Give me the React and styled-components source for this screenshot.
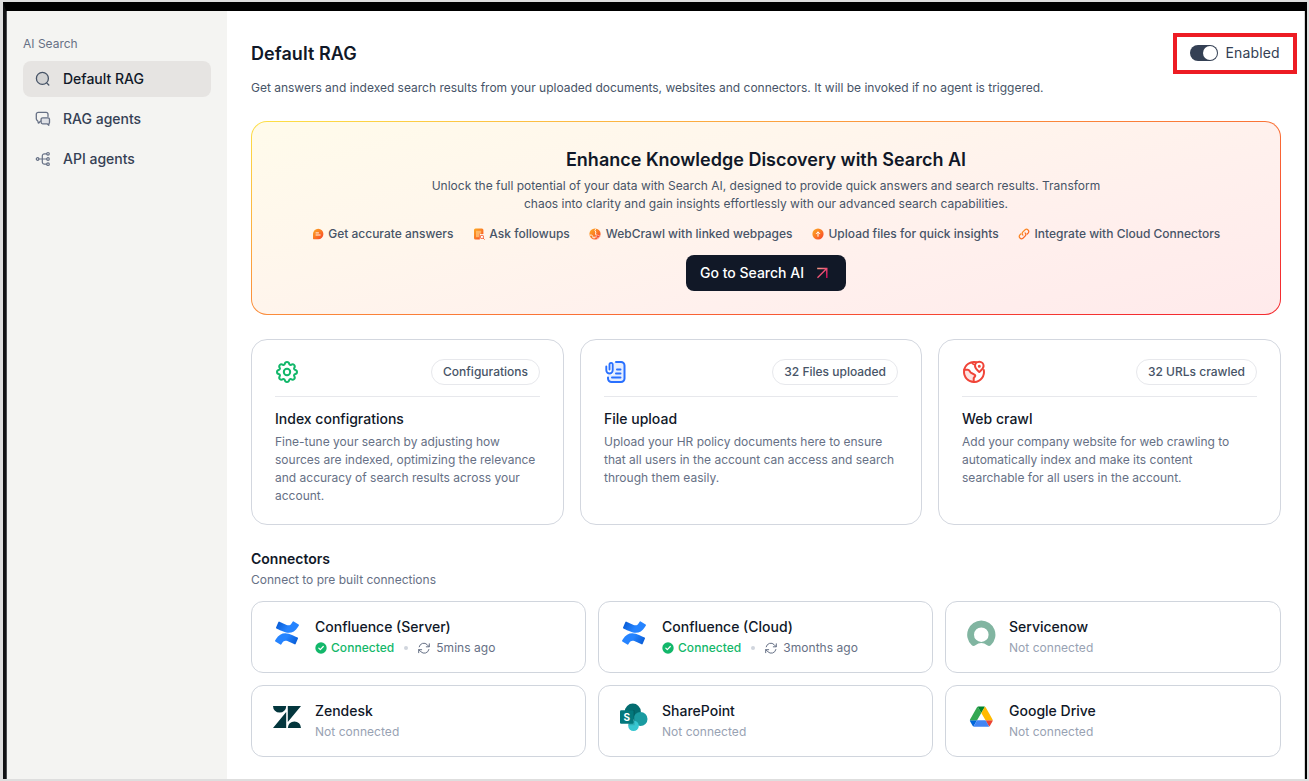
import React from "react";
import styled, { createGlobalStyle } from "styled-components";

const Global = createGlobalStyle`
  *, *::before, *::after { box-sizing: border-box; }
  body { margin: 0; background: #dedede; font-family: Inter, "Liberation Sans", sans-serif; color: #101828; }
  h1, h2, h3, p { margin: 0; }
  svg { display: block; flex: none; }
`;

const Frame = styled.div`
  width: 1309px;
  height: 781px;
  padding: 2px 2px 2px 3px;
  background: #dedede;
  overflow: hidden;
`;
const Screen = styled.div`
  display: flex;
  height: 777px;
  border-style: solid;
  border-width: 9px 2px 0 3px;
  border-color: #000 #000 #000 #111214;
  background: #fff;
`;

const Sidebar = styled.nav`
  width: 221px;
  padding: 24px 16px;
  border-left: 1px solid #4b4d50;
  background: #f4f4f2;
  display: flex;
  flex-direction: column;
  gap: 4px;
`;
const SidebarTitle = styled.div`
  font-size: 12px;
  line-height: 18px;
  height: 22px;
  color: #667085;
`;
const NavItem = styled.a`
  display: flex;
  align-items: center;
  gap: 12px;
  height: 36px;
  padding: 0 12px;
  border-radius: 8px;
  font-size: 14px;
  line-height: 18px;
  font-weight: 500;
  color: ${(p) => (p.$active ? "#101828" : "#344054")};
  background: ${(p) => (p.$active ? "#e6e4e2" : "transparent")};
`;
const NavLabel = styled.span`
  padding-bottom: 1px;
`;

const Main = styled.main`
  flex: 1;
  padding: 22px 23px 0 24px;
  border-right: 1px solid #d6d6d6;
`;
const Header = styled.header`
  display: flex;
  justify-content: space-between;
  height: 46px;
`;
const PageTitle = styled.h1`
  margin-top: 7px;
  font-size: 18px;
  line-height: 28px;
  font-weight: 600;
  letter-spacing: 0.05px;
`;
const StatusBox = styled.div`
  display: flex;
  align-items: center;
  gap: 8px;
  width: 124px;
  height: 41px;
  margin-right: -16px;
  padding: 0 0 2px 12.5px;
  border: 4px solid #ed1c24;
  font-size: 14px;
  line-height: 17px;
  letter-spacing: 0.13px;
  color: #344054;
`;
const Toggle = styled.span`
  display: flex;
  justify-content: flex-end;
  width: 28px;
  height: 16px;
  padding: 1px;
  border-radius: 8px;
  background: #344054;
  &::after { content: ""; width: 14px; height: 14px; border-radius: 50%; background: #fff; }
`;
const Lead = styled.p`
  height: 42px;
  font-size: 12px;
  line-height: 18px;
  color: #475467;
  letter-spacing: -0.01px;
  white-space: nowrap;
`;

const Hero = styled.section`
  display: flex;
  flex-direction: column;
  align-items: center;
  height: 194px;
  padding-top: 24px;
  border: 1px solid transparent;
  border-radius: 16px;
  background:
    linear-gradient(165deg, #fffbeb 0%, #fff6ec 35%, #fff0ed 66%, #ffeaeb 100%) padding-box,
    linear-gradient(165deg, #fde047 0%, #fb923c 38%, #fa7035 60%, #f42c30 92%) border-box;
`;
const HeroTitle = styled.h2`
  font-size: 18px;
  line-height: 28px;
  font-weight: 600;
`;
const HeroText = styled.p`
  margin-top: 3px;
  font-size: 12px;
  line-height: 18px;
  color: #475467;
  text-align: center;
  white-space: pre-line;
`;
const FeatureList = styled.div`
  display: flex;
  gap: 19.5px;
  margin-top: 12px;
`;
const Feature = styled.span`
  display: flex;
  align-items: center;
  gap: 4.5px;
  font-size: 12px;
  line-height: 18px;
  font-weight: 500;
  color: #475467;
  white-space: nowrap;
`;
const HeroButton = styled.button`
  display: flex;
  align-items: center;
  gap: 12px;
  width: 160px;
  height: 36px;
  margin-top: 12px;
  padding: 0 14px;
  border: 0;
  border-radius: 8px;
  background: #111827;
  color: #fff;
  font: 500 14px/18px Inter, sans-serif;
  white-space: nowrap;
`;

const SourceGrid = styled.section`
  display: grid;
  grid-template-columns: 313px 342px 1fr;
  gap: 16px;
  margin-top: 24px;
`;
const SourceCard = styled.article`
  height: 186px;
  padding: 19px 23px;
  border: 1px solid #d3d7df;
  border-radius: 16px;
`;
const SourceHead = styled.div`
  display: flex;
  align-items: center;
  justify-content: space-between;
  height: 38px;
  padding-bottom: 11px;
  border-bottom: 1px solid #e7e8ec;
`;
const Pill = styled.span`
  padding: 0 11px;
  border: 1px solid #e7e8ec;
  border-radius: 13px;
  font-size: 12px;
  font-weight: 500;
  line-height: 24px;
  color: #475467;
`;
const SourceTitle = styled.h3`
  margin-top: 12px;
  font-size: 14px;
  line-height: 20px;
  font-weight: 500;
`;
const SourceText = styled.p`
  margin-top: 4px;
  font-size: 12px;
  line-height: 18px;
  color: #667085;
  white-space: pre;
`;

const SectionTitle = styled.h2`
  margin-top: 24px;
  font-size: 14px;
  line-height: 20px;
  font-weight: 600;
`;
const SectionText = styled.p`
  margin-top: 2px;
  font-size: 12px;
  line-height: 18px;
  color: #667085;
`;
const ConnectorGrid = styled.section`
  display: grid;
  grid-template-columns: 335px 335px 1fr;
  gap: 12px;
  margin-top: 12px;
`;
const ConnectorCard = styled.article`
  display: flex;
  gap: 12px;
  height: 72px;
  padding: 15px 19px;
  border: 1px solid #d0d5dd;
  border-radius: 12px;
`;
const ConnectorName = styled.h3`
  font-size: 14px;
  line-height: 20px;
  font-weight: 500;
`;
const ConnectorStatus = styled.div`
  display: flex;
  align-items: center;
  margin-top: 2px;
  font-size: 12px;
  line-height: 18px;
  letter-spacing: 0.04px;
  color: #98a2b3;
`;
const Connected = styled.span`
  display: flex;
  align-items: center;
  gap: 4px;
  font-weight: 500;
  color: #12b76a;
`;
const Dot = styled.span`
  width: 4px;
  height: 4px;
  margin: 0 10px;
  border-radius: 50%;
  background: #d0d5dd;
`;
const Synced = styled.span`
  display: flex;
  align-items: center;
  gap: 6px;
  color: #667085;
`;

const Line = ({ size = 16, box = 16, color, width = 1.3, children }) => (
  <svg width={size} height={size} viewBox={`0 0 ${box} ${box}`} fill="none" stroke={color} strokeWidth={width} strokeLinecap="round" strokeLinejoin="round">
    {children}
  </svg>
);

const SearchIcon = () => (
  <Line color="#475467">
    <circle cx="7.4" cy="7.4" r="6" fill="#d3d3d3" />
    <path d="M11.700 11.900l2.100 2.100" />
  </Line>
);
const ChatIcon = () => (
  <Line color="#667085">
    <path d="M5.600 10.200c-1 .1-1.300 1.900-2 1.900s-.3-1.700-1-2.300c-.8-.5-1.300-1-1.300-2V3.300a2 2 0 0 1 2-2h7.700a2 2 0 0 1 2 2v2.200" />
    <path d="M7.600 6.800h5.400a1.500 1.500 0 0 1 1.500 1.500v3.200c0 .7-.5 1-.7 1.400v1.400l-1.700-1.500H7.600a1.500 1.500 0 0 1-1.500-1.500v-3a1.500 1.500 0 0 1 1.500-1.500z" fill="#dfe1e6" />
  </Line>
);
const NodesIcon = () => (
  <Line color="#667085" width={1.2}>
    <circle cx="2.600" cy="8" r="1.300" /><circle cx="13" cy="2.800" r="1.300" />
    <circle cx="13" cy="8" r="1.300" /><circle cx="13" cy="13.200" r="1.300" />
    <path d="M3.900 8h7.800M11.700 2.800H9.500A2.200 2.200 0 0 0 7.300 5v6a2.200 2.200 0 0 0 2.200 2.200h2.200" />
  </Line>
);

const Warm = ({ id, children }) => (
  <svg width="12" height="12" viewBox="0 0 12 12" fill="none">
    <defs>
      <linearGradient id={id} x1="0" y1="0" x2="12" y2="12" gradientUnits="userSpaceOnUse">
        <stop stopColor="#fdb022" /><stop offset=".5" stopColor="#fb7a24" /><stop offset="1" stopColor="#f73a2c" />
      </linearGradient>
    </defs>
    {children}
  </svg>
);
const AnswerIcon = () => (
  <Warm id="w1">
    <path d="M6.200.8a5.200 5.200 0 1 1 0 10.400H1.500A.6.6 0 0 1 1 10.600V6A5.200 5.200 0 0 1 6.200.8z" fill="url(#w1)" />
    <path d="M4 4.900h2.500M4 7h4.200" stroke="#fff" strokeWidth=".9" strokeLinecap="round" />
  </Warm>
);
const FollowIcon = () => (
  <Warm id="w2">
    <path d="M2.500.5h6.400a1.500 1.500 0 0 1 1.500 1.500v4H6.800v5.500H2.500A1.500 1.500 0 0 1 1 10V2A1.500 1.500 0 0 1 2.500.5z" fill="url(#w2)" />
    <path d="M3 2.700h5.200v3H6v3.500H3z" fill="#ffc77d" opacity=".75" />
    <rect x="7.400" y="7.400" width="3" height="3" rx=".8" fill="#fff" stroke="#f75a2c" strokeWidth="1" />
    <path d="M10.400 10.400l.9.9" stroke="#f75a2c" strokeLinecap="round" />
  </Warm>
);
const CrawlIcon = () => (
  <Warm id="w3">
    <circle cx="6" cy="6" r="5.600" fill="url(#w3)" />
    <path d="M6.700.8L5.900 2.700l1 1.300-.4 2 .4.900M.7 7l2 .2 1.300 1.200-.1 1.400h2.200V8.400" stroke="#fff3e8" strokeWidth="1" />
    <path d="M6.800 6.500l5 1.900-2.100.9-.9 2.200z" fill="#f7462c" stroke="#fff3ee" strokeWidth=".5" />
  </Warm>
);
const UploadIcon = () => (
  <Warm id="w4">
    <circle cx="6" cy="6" r="5.600" fill="url(#w4)" />
    <path d="M6 8.300V4.100M4.300 5.600L6 3.900l1.700 1.700" stroke="#fff" strokeWidth="1" strokeLinecap="round" strokeLinejoin="round" />
  </Warm>
);
const LinkIcon = () => (
  <Warm id="w5">
    <g stroke="url(#w5)" strokeWidth="1.250" strokeLinecap="round">
      <path d="M4.900 7.100a2.300 2.300 0 0 1 0-3.200l2.200-2.200a2.300 2.300 0 0 1 3.200 3.200L9.200 6" />
      <path d="M7.100 4.900a2.300 2.300 0 0 1 0 3.200l-2.200 2.200a2.300 2.300 0 0 1-3.200-3.200L2.800 6" />
    </g>
  </Warm>
);
const ArrowIcon = () => (
  <svg width="12" height="12" viewBox="0 0 12 12" fill="none">
    <defs>
      <linearGradient id="arrow" x1="1" y1="1" x2="11" y2="10" gradientUnits="userSpaceOnUse">
        <stop stopColor="#f8a58a" /><stop offset=".5" stopColor="#ee5576" /><stop offset="1" stopColor="#d80f5c" />
      </linearGradient>
    </defs>
    <path d="M1.200 1.500h9.600v9.500M10.500 1.800L1.500 10.800" stroke="url(#arrow)" strokeWidth="1.400" />
  </svg>
);

const GearIcon = () => (
  <Line size={24} box={24} color="#12b76a" width={2}>
    <circle cx="12" cy="12" r="3.200" />
    <path d="M9.700 4.100C10.300 1.300 13.700 1.300 14.300 4.100C14.600 4.900 15.400 5.200 16 4.800C18.400 3.200 20.800 5.600 19.200 8C18.800 8.600 19.100 9.400 19.900 9.700C22.700 10.300 22.700 13.700 19.900 14.300C19.100 14.600 18.800 15.400 19.200 16C20.800 18.400 18.400 20.800 16 19.200C15.400 18.800 14.600 19.100 14.300 19.900C13.700 22.700 10.300 22.700 9.700 19.900C9.400 19.100 8.600 18.800 8 19.200C5.600 20.800 3.200 18.400 4.800 16C5.200 15.400 4.900 14.600 4.100 14.300C1.300 13.700 1.300 10.300 4.100 9.700C4.900 9.400 5.200 8.600 4.800 8C3.200 5.600 5.600 3.200 8 4.800C8.600 5.200 9.400 4.900 9.700 4.100Z" />
  </Line>
);
const FileIcon = () => (
  <Line size={24} box={24} color="#2970ff" width={2}>
    <path d="M10 2h10v20H4v-7h5z" fill="#e6eeff" stroke="none" />
    <path d="M12 2h5a3.500 3.500 0 0 1 3.500 3.500v13A3.500 3.500 0 0 1 17 22H7.500A3.500 3.500 0 0 1 4 18.500V17.500" />
    <path d="M5.500 9.500V4.500a1.600 1.600 0 0 1 3.200 0v5.800a3.200 3.200 0 0 1-6.400 0V6.500" strokeWidth="1.900" />
    <path d="M13 9.500h3.500M12 13.500h4.500M8 17.500h8.500" />
  </Line>
);
const GlobeIcon = () => (
  <Line size={24} box={24} color="#f04438" width={2}>
    <path d="M2.500 10H6l3.500 3 3.500 2.500-2 3V22A10 10 0 0 1 2.500 10z" fill="#fde3e1" stroke="none" />
    <path d="M14.500 2.300A10 10 0 1 0 21.800 10" />
    <path d="M2.300 9.800h3.400c1 0 1.500.5 1.900 1.200.5 1 1 1.900 2.200 2.200l3 1.700c.6.400.6 1 .2 1.500l-1.300 1.800v3.500" />
    <path d="M9.800 2.600c.7 1.400 1.200 1.700 2.600 2" strokeWidth="1.600" />
    <path d="M17.300 12c-1.700-1.600-4.300-3.400-4.300-6a4.300 4.300 0 0 1 8.600 0c0 2.600-2.600 4.400-4.300 6z" fill="#fff" />
    <circle cx="17.300" cy="6.200" r=".7" strokeWidth="1.600" />
  </Line>
);

const CheckIcon = () => (
  <svg width="12" height="12" viewBox="0 0 12 12" fill="none">
    <circle cx="6" cy="6" r="5.700" fill="#12b76a" />
    <path d="M3.800 6.200l1.500 1.500 3-3.200" stroke="#fff" strokeWidth="1.200" strokeLinecap="round" strokeLinejoin="round" />
  </svg>
);
const SyncIcon = () => (
  <Line size={12} box={12} color="#667085" width={1}>
    <path d="M11.300 1.800v3h-3M.7 10.700v-3h3M1.200 4.800a4.700 4.700 0 0 1 8-2.100l2.100 2.100M.7 7.700l2.200 2a4.700 4.700 0 0 0 8-2.200" />
  </Line>
);

const ConfluenceLogo = ({ id }) => (
  <svg width="32" height="32" viewBox="-4 -4 32 32">
    <defs>
      <linearGradient id={`${id}lower`} x1="23" y1="25" x2="8" y2="15" gradientUnits="userSpaceOnUse">
        <stop stopColor="#0052cc" /><stop offset=".8" stopColor="#2684ff" />
      </linearGradient>
      <linearGradient id={`${id}upper`} x1="1" y1="-1" x2="16" y2="9" gradientUnits="userSpaceOnUse">
        <stop stopColor="#0052cc" /><stop offset=".8" stopColor="#2684ff" />
      </linearGradient>
    </defs>
    <path fill={`url(#${id}lower)`} d="M.87 18.257c-.248.382-.53.875-.763 1.245a.764.764 0 0 0 .255 1.040l4.965 3.054a.764.764 0 0 0 1.058-.26c.199-.332.454-.763.733-1.221 1.967-3.247 3.945-2.853 7.508-1.146l4.957 2.337a.764.764 0 0 0 1.028-.382l2.364-5.346a.764.764 0 0 0-.382-1 599.851 599.851 0 0 1-4.965-2.361C10.911 10.970 5.224 11.185.87 18.257z" />
    <path fill={`url(#${id}upper)`} d="M23.131 5.743c.249-.405.531-.875.764-1.250a.764.764 0 0 0-.256-1.034L18.675.404a.764.764 0 0 0-1.058.26c-.195.335-.451.763-.734 1.225-1.966 3.246-3.945 2.850-7.508 1.146L4.437.694a.764.764 0 0 0-1.027.382L1.046 6.422a.764.764 0 0 0 .382.999c1.039.49 3.105 1.467 4.965 2.361 6.698 3.246 12.392 3.029 16.738-4.039z" />
  </svg>
);
const ServicenowLogo = () => (
  <svg width="32" height="32" viewBox="0 0 32 32">
    <path fill="#81b5a1" fillRule="evenodd" d="M16.300 3.500A14.200 14.200 0 0 0 6.600 28a3 3 0 0 0 3.800.200 10 10 0 0 1 11.800 0 3 3 0 0 0 3.800-.200A14.200 14.200 0 0 0 16.300 3.500zM16.300 25a7.300 7.300 0 1 1 0-14.600A7.300 7.300 0 0 1 16.300 25z" />
  </svg>
);
const ZendeskLogo = () => (
  <svg width="32" height="32" viewBox="0 0 32 32" fill="#03363d">
    <path d="M2 5h13.200a6.600 6.600 0 0 1-13.200 0zM15.200 11v16H2zM16.800 5H30L16.800 21zM16.800 27a6.600 6.600 0 0 1 13.200 0z" />
  </svg>
);
const LogoLetter = styled.text`
  font: 700 10px Inter, sans-serif;
  fill: #fff;
`;
const SharePointLogo = () => (
  <svg width="32" height="32" viewBox="0 0 32 32">
    <circle cx="14.800" cy="10.600" r="8" fill="#036c70" />
    <circle cx="22.500" cy="18" r="7" fill="#1a9ba1" />
    <circle cx="15.500" cy="24.700" r="5.300" fill="#37c6d0" />
    <path d="M4 9h11.500a1.200 1.200 0 0 1 1.200 1.200v14H10V9z" fill="#000" opacity=".12" />
    <rect x="2" y="9.200" width="13.600" height="13.600" rx="1.200" fill="#03787c" />
    <LogoLetter x="8.800" y="19.600" textAnchor="middle">S</LogoLetter>
  </svg>
);
const DriveLogo = () => (
  <svg width="32" height="32" viewBox="-4 -6 95.300 90">
    <g transform="translate(10.500 7.500) scale(.78)">
      <path d="M6.600 66.850l3.850 6.650c.8 1.400 1.950 2.500 3.300 3.300L27.500 53H0c0 1.550.4 3.100 1.200 4.500z" fill="#0066da" />
      <path d="M43.650 25L29.900 1.200c-1.350.8-2.500 1.900-3.300 3.300L1.200 48.500A9.060 9.060 0 0 0 0 53h27.500z" fill="#34a853" />
      <path d="M73.550 76.800c1.350-.8 2.500-1.900 3.300-3.300l1.600-2.750L86.100 57.500c.8-1.400 1.200-2.950 1.200-4.500H59.800l5.850 11.500z" fill="#ea4335" />
      <path d="M43.650 25L57.400 1.200C56.050.4 54.500 0 52.900 0H34.400c-1.600 0-3.150.45-4.500 1.200z" fill="#00832d" />
      <path d="M59.800 53H27.500L13.750 76.800c1.350.8 2.900 1.200 4.500 1.200h50.800c1.600 0 3.150-.45 4.500-1.200z" fill="#4285f4" />
      <path d="M73.400 26.500L60.700 4.500c-.8-1.400-1.950-2.500-3.300-3.300L43.650 25 59.800 53h27.450c0-1.550-.4-3.100-1.200-4.500z" fill="#ffba00" />
    </g>
  </svg>
);

const features = [
  [AnswerIcon, "Get accurate answers"],
  [FollowIcon, "Ask followups"],
  [CrawlIcon, "WebCrawl with linked webpages"],
  [UploadIcon, "Upload files for quick insights"],
  [LinkIcon, "Integrate with Cloud Connectors"],
];
const sources = [
  [GearIcon, "Configurations", "Index configrations", "Fine-tune your search by adjusting how\nsources are indexed, optimizing the relevance\nand accuracy of search results across your\naccount."],
  [FileIcon, "32 Files uploaded", "File upload", "Upload your HR policy documents here to ensure\nthat all users in the account can access and search\nthrough them easily."],
  [GlobeIcon, "32 URLs crawled", "Web crawl", "Add your company website for web crawling to\nautomatically index and make its content\nsearchable for all users in the account."],
];
const connectors = [
  [<ConfluenceLogo id="cs" />, "Confluence (Server)", "5mins ago"],
  [<ConfluenceLogo id="cc" />, "Confluence (Cloud)", "3months ago"],
  [<ServicenowLogo />, "Servicenow"],
  [<ZendeskLogo />, "Zendesk"],
  [<SharePointLogo />, "SharePoint"],
  [<DriveLogo />, "Google Drive"],
];

export default function App() {
  return (
    <Frame>
      <Global />
      <Screen>
        <Sidebar>
          <SidebarTitle>AI Search</SidebarTitle>
          <NavItem $active><SearchIcon /><NavLabel>Default RAG</NavLabel></NavItem>
          <NavItem><ChatIcon /><NavLabel>RAG agents</NavLabel></NavItem>
          <NavItem><NodesIcon /><NavLabel>API agents</NavLabel></NavItem>
        </Sidebar>
        <Main>
          <Header>
            <PageTitle>Default RAG</PageTitle>
            <StatusBox><Toggle />Enabled</StatusBox>
          </Header>
          <Lead>Get answers and indexed search results from your uploaded documents, websites and connectors. It will be invoked if no agent is triggered.</Lead>
          <Hero>
            <HeroTitle>Enhance Knowledge Discovery with Search AI</HeroTitle>
            <HeroText>{"Unlock the full potential of your data with Search AI, designed to provide quick answers and search results. Transform\nchaos into clarity and gain insights effortlessly with our advanced search capabilities."}</HeroText>
            <FeatureList>
              {features.map(([Icon, label]) => <Feature key={label}><Icon />{label}</Feature>)}
            </FeatureList>
            <HeroButton><NavLabel>Go to Search AI</NavLabel><ArrowIcon /></HeroButton>
          </Hero>
          <SourceGrid>
            {sources.map(([Icon, pill, title, text]) => (
              <SourceCard key={title}>
                <SourceHead><Icon /><Pill>{pill}</Pill></SourceHead>
                <SourceTitle>{title}</SourceTitle>
                <SourceText>{text}</SourceText>
              </SourceCard>
            ))}
          </SourceGrid>
          <SectionTitle>Connectors</SectionTitle>
          <SectionText>Connect to pre built connections</SectionText>
          <ConnectorGrid>
            {connectors.map(([logo, name, synced]) => (
              <ConnectorCard key={name}>
                {logo}
                <div>
                  <ConnectorName>{name}</ConnectorName>
                  <ConnectorStatus>
                    {synced ? (
                      <>
                        <Connected><CheckIcon />Connected</Connected>
                        <Dot />
                        <Synced><SyncIcon />{synced}</Synced>
                      </>
                    ) : "Not connected"}
                  </ConnectorStatus>
                </div>
              </ConnectorCard>
            ))}
          </ConnectorGrid>
        </Main>
      </Screen>
    </Frame>
  );
}
